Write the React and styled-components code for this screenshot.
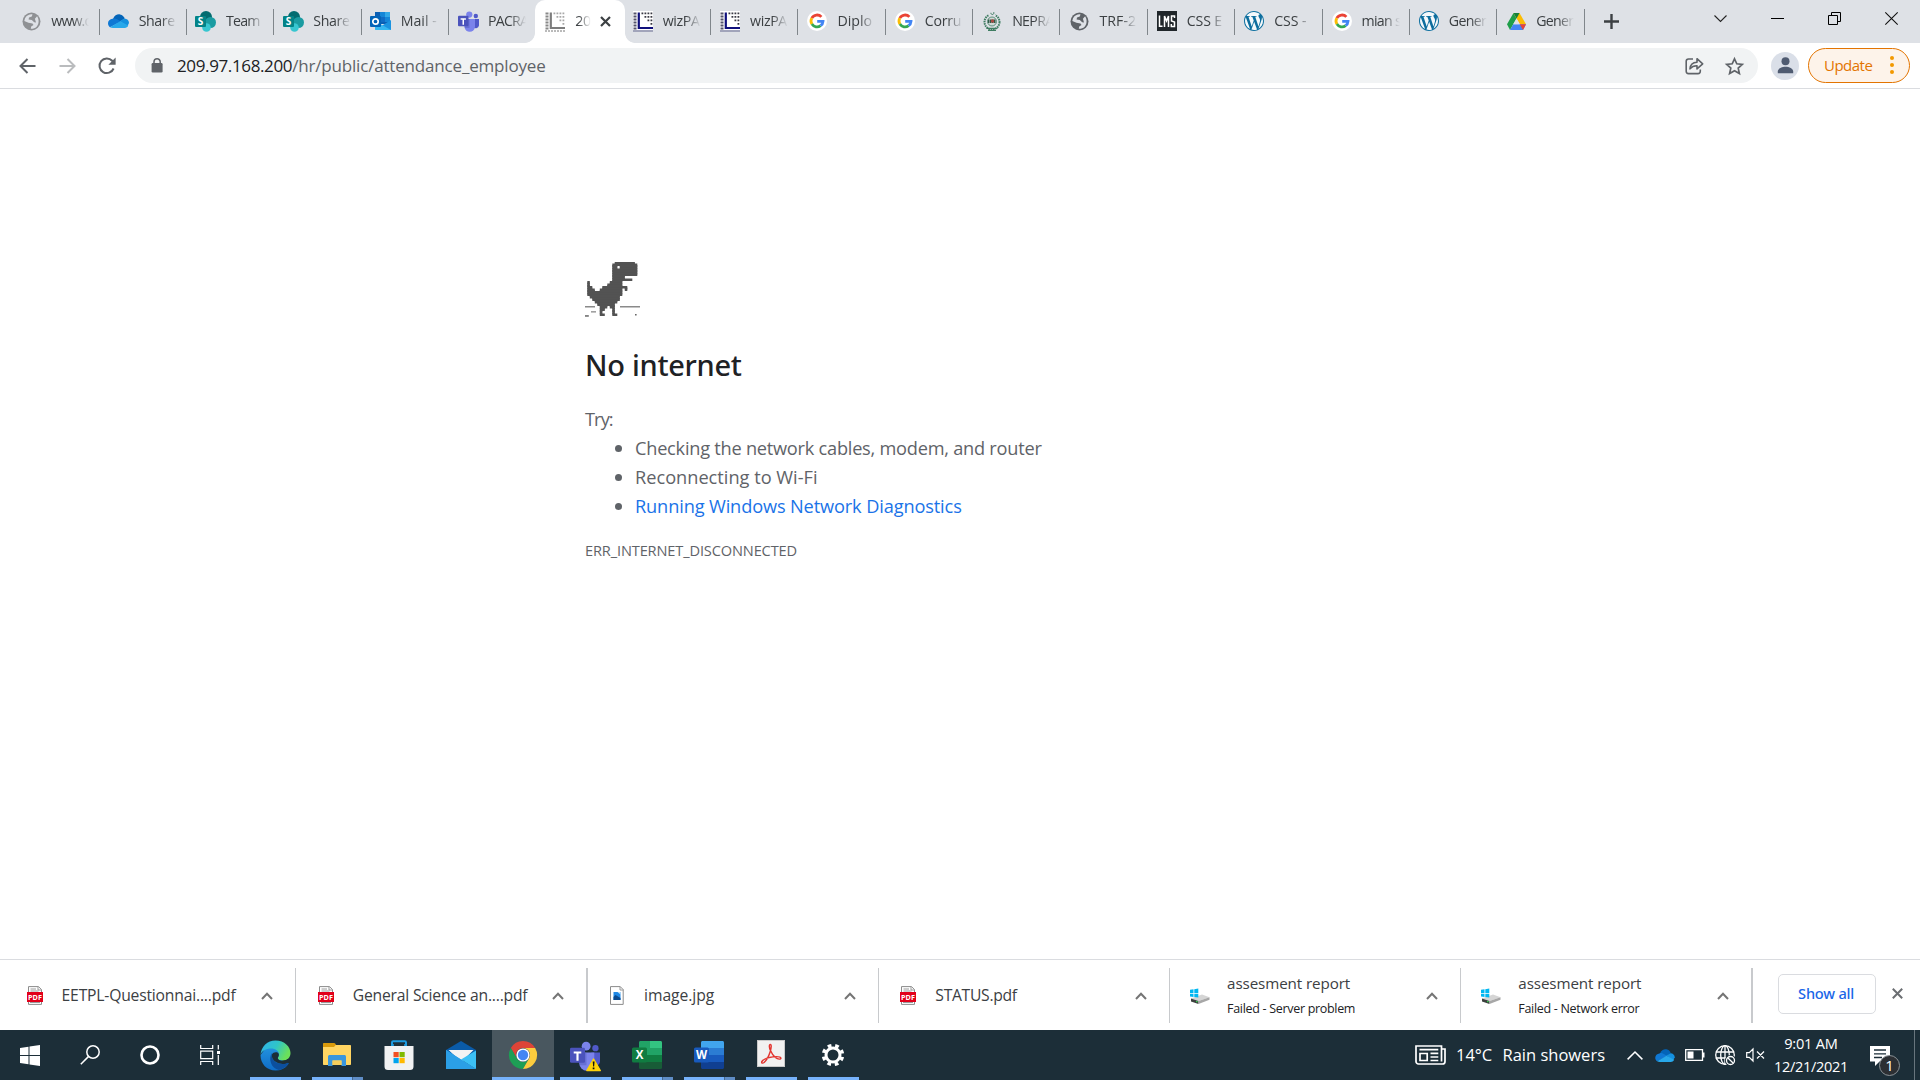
import React from "react";
import styled, { createGlobalStyle } from "styled-components";

const Global = createGlobalStyle`
  * { box-sizing: border-box; }
  body { margin: 0; background: #fff; overflow: hidden; }
  svg { display: block; flex: none; overflow: visible; }
`;

const Screen = styled.div`
  width: 1920px;
  height: 1080px;
  display: flex;
  flex-direction: column;
  background: #fff;
  color: #202124;
  font-family: "Open Sans", "Noto Sans", sans-serif;
  white-space: nowrap;
`;

const Text = styled.span`
  letter-spacing: ${(p) => p.$ls || 0}px;
`;

/* ---------- tab strip ---------- */
const TabStrip = styled.header`
  height: 43px;
  flex: none;
  display: flex;
  background: #dee1e6;
  padding-left: 12.3px;
`;

const Tab = styled.div`
  position: relative;
  width: 87.35px;
  height: 42px;
  flex: none;
  display: flex;
  align-items: center;
  padding-left: 9px;
  &::after {
    content: "";
    position: absolute;
    right: 0;
    top: 9px;
    width: 1px;
    height: 26px;
    background: ${(p) => (p.$noLine ? "transparent" : "#80868b")};
  }
`;

const ActiveTab = styled.div`
  position: relative;
  width: 89.5px;
  height: 43px;
  margin: 0 -1.05px;
  flex: none;
  display: flex;
  align-items: center;
  padding: 0 0 1px 10px;
  background: #fff;
  border-radius: 10px 10px 0 0;
  z-index: 1;
  &::before,
  &::after {
    content: "";
    position: absolute;
    bottom: 0;
    width: 10px;
    height: 10px;
  }
  &::before {
    left: -10px;
    background: radial-gradient(circle at 0 0, transparent 9.5px, #fff 10.2px);
  }
  &::after {
    right: -10px;
    background: radial-gradient(circle at 100% 0, transparent 9.5px, #fff 10.2px);
  }
`;

const TabTitle = styled.span`
  width: ${(p) => p.$w || 38}px;
  margin-left: 10px;
  overflow: hidden;
  font-size: 14.2px;
  line-height: 22px;
  letter-spacing: ${(p) => p.$ls ?? -0.4}px;
  color: #3c4043;
  -webkit-mask-image: linear-gradient(90deg, #000 ${(p) => (p.$w ? 20 : 58)}%, transparent 100%);
  mask-image: linear-gradient(90deg, #000 ${(p) => (p.$w ? 20 : 58)}%, transparent 100%);
`;

const CloseTab = styled.div`
  margin-left: 9px;
`;

const NewTab = styled.div`
  display: flex;
  align-items: center;
  margin-left: 19.5px;
`;

const WindowButtons = styled.div`
  margin-left: auto;
  display: flex;
  align-items: center;
  height: 37px;
  padding-right: 0.5px;
`;

const WindowButton = styled.div`
  width: ${(p) => p.$w || 57}px;
  display: flex;
  justify-content: center;
`;

/* ---------- toolbar ---------- */
const Toolbar = styled.div`
  height: 46px;
  flex: none;
  display: flex;
  align-items: center;
  border-bottom: 1px solid #dadce0;
  padding: 0 10px 0 7px;
`;

const NavButton = styled.div`
  width: 40px;
  display: flex;
  justify-content: center;
`;

const Omnibox = styled.div`
  width: 1623px;
  height: 35px;
  margin-left: 8px;
  border-radius: 18px;
  background: #f1f3f4;
  display: flex;
  align-items: center;
  padding: 0 14px 0 15px;
`;

const Url = styled.div`
  margin-left: 13px;
  padding-top: 1px;
  font-size: 17px;
  line-height: 24px;
  color: #5f6368;
`;

const Host = styled.span`
  color: #202124;
  letter-spacing: -0.37px;
`;

const OmniActions = styled.div`
  margin-left: auto;
  display: flex;
  align-items: center;
  gap: 21px;
`;

const Avatar = styled.div`
  width: 28px;
  height: 28px;
  border-radius: 50%;
  background: #dadfe8;
  margin-left: 13px;
  display: flex;
  align-items: center;
  justify-content: center;
`;

const UpdatePill = styled.div`
  width: 102px;
  height: 35px;
  margin-left: 9px;
  border: 1.5px solid #e37400;
  border-radius: 18px;
  background: #fdf3ea;
  color: #e37400;
  display: flex;
  align-items: center;
  padding: 0 15px 2px 15px;
  justify-content: space-between;
  font-size: 15px;
  line-height: 20px;
`;

const Dots = styled.div`
  display: flex;
  flex-direction: column;
  gap: 2.6px;
  padding-top: 1px;
  i {
    width: 4px;
    height: 4px;
    border-radius: 50%;
    background: #f29900;
  }
`;

/* ---------- error page ---------- */
const Page = styled.main`
  flex: 1;
  padding: 172px 0 0 585px;
  color: #5f6368;
`;

const Title = styled.h1`
  margin: 28px 0 0;
  font: 500 29px/40px "Noto Sans", sans-serif;
  letter-spacing: -0.28px;
  color: #202124;
`;

const Suggestions = styled.div`
  margin-top: 20px;
  font-size: 18.2px;
  line-height: 29px;
`;

const List = styled.ul`
  list-style: none;
  margin: 0;
  padding: 0 0 0 29.5px;
`;

const Item = styled.li`
  display: flex;
  align-items: center;
  gap: 13.5px;
  color: ${(p) => (p.$link ? "#1a73e8" : "#5f6368")};
  &::before {
    content: "";
    width: 7px;
    height: 7px;
    border-radius: 50%;
    background: #5f6368;
  }
`;

const ErrorCode = styled.div`
  margin-top: 19px;
  font-size: 14.6px;
  line-height: 20px;
  letter-spacing: -0.14px;
`;

/* ---------- download shelf ---------- */
const Shelf = styled.section`
  height: 71px;
  flex: none;
  display: flex;
  border-top: 1px solid #dadce0;
  background: #fff;
  padding: 8px 0 0 5.1px;
`;

const Download = styled.div`
  width: 291.25px;
  height: 55px;
  flex: none;
  display: flex;
  align-items: center;
  border-right: ${(p) => (p.$thick ? 2 : 1)}px solid #c8cacd;
  padding: 0 22px 0 ${(p) => (p.$failed ? 20 : 21.5)}px;
`;

const FileInfo = styled.div`
  flex: 1;
  margin-left: ${(p) => (p.$failed ? 17 : 18)}px;
  font-size: ${(p) => (p.$failed ? 15.2 : 15.7)}px;
  line-height: 25px;
  color: #3c4043;
`;

const Failure = styled.div`
  font-size: 12.5px;
  letter-spacing: -0.31px;
  color: #202124;
`;

const ShowAll = styled.button`
  width: 98px;
  height: 40px;
  margin: 6px 0 0 25.5px;
  padding: 0 2px 2px 0;
  border: 1px solid #dadce0;
  border-radius: 5px;
  background: #fff;
  color: #1a66e8;
  font: 500 14.6px/20px "Noto Sans", sans-serif;
  letter-spacing: -0.2px;
`;

const CloseShelf = styled.div`
  margin: 20px 0 0 15.5px;
`;

/* ---------- taskbar ---------- */
const Taskbar = styled.footer`
  height: 50px;
  flex: none;
  display: flex;
  background: #1c2e38;
  color: #fff;
`;

const System = styled.div`
  width: 60px;
  height: 50px;
  display: flex;
  align-items: center;
  justify-content: center;
`;

const Apps = styled.nav`
  display: flex;
  margin-left: 4px;
`;

const TaskApp = styled.div`
  position: relative;
  width: 62px;
  height: 50px;
  display: flex;
  justify-content: center;
  padding-top: ${(p) => p.$top ?? 10}px;
  background: ${(p) => (p.$active ? "#49575f" : "transparent")};
  &::after {
    content: "";
    position: absolute;
    bottom: 0;
    left: ${(p) => (p.$active ? 0 : 5.5)}px;
    right: ${(p) => (p.$active ? 0 : 5.5)}px;
    height: 3px;
    background: ${(p) =>
      !p.$running ? "transparent" : p.$stack ? "linear-gradient(90deg, #76b2fb 78%, #46698f 78%, #46698f 80%, #5f8dc6 80%)" : "#76b2fb"};
  }
`;

const Tray = styled.div`
  margin-left: auto;
  display: flex;
  align-items: center;
  font-size: 16.5px;
`;

const Weather = styled.div`
  display: flex;
  align-items: center;
  gap: 10.500px;
  margin-right: 22px;
  line-height: 22px;
`;

const TrayIcons = styled.div`
  display: flex;
  align-items: center;
  gap: 10px;
`;

const Clock = styled.div`
  width: 80px;
  margin-left: 6px;
  text-align: center;
  font-size: 14.6px;
  line-height: 22.6px;
`;

const Notifications = styled.div`
  position: relative;
  margin: 1px 0 0 19px;
`;

const Badge = styled.div`
  position: absolute;
  left: 9px;
  top: 9px;
  width: 21px;
  height: 21px;
  border-radius: 50%;
  border: 1px solid #8b9297;
  background: #2c2f33;
  font-size: 15px;
  line-height: 19px;
  text-align: center;
`;

const DesktopEdge = styled.div`
  width: 6px;
  height: 50px;
  margin-left: 24px;
  border-left: 1px solid #68757d;
`;

/* ---------- icons ---------- */
const Globe = ({ color = "#5f6368" }) => (
  <svg width="19" height="19" viewBox="0 0 19 19">
    <circle cx="9.5" cy="9.5" r="9" fill={color} />
    <path d="M3 6.2C5 3 8 2 10.5 2.4L9.8 4.5 7 5.6 6.6 7.6 9.8 8l2.4 2.2 1.8.2-1.1-3.6 2.2-2.6c2 3 2.2 7.5-.5 10.5-1.6 1.6-3.6 2.2-5.8 2.1l.4-2.4 2.3-1.4-1-1.5-4-.7L2.3 9z" fill="#dee1e6" />
  </svg>
);

const Cloud = ({ w = 21, h = 14 }) => (
  <svg width={w} height={h} viewBox="0 0 21 14">
    <path d="M5 5C6.500 1 9.500 0 12 .4c2.500.5 4 2 4.700 4.200L10 9z" fill="#0364b8" />
    <path d="M4.500 4.800C2 5 0 7 0 9.300c0 1.800.8 3 2 3.900L13 7.500 8.700 5C7.500 4.300 6 4.200 4.500 4.800z" fill="#0f78d4" />
    <path d="M12 7l4.500-2.500c2.500.1 4.500 2 4.500 4.500l-2 4z" fill="#1490df" />
    <path d="M2 13.200 12.200 7.200 20.300 11.600C19.500 13.200 18.300 14 16.800 14H5C3.800 14 2.800 13.700 2 13.200z" fill="#28a8ea" />
  </svg>
);

const SharePoint = () => (
  <svg width="21" height="21" viewBox="0 0 21 21">
    <circle cx="11" cy="6" r="6" fill="#036c70" />
    <circle cx="15.500" cy="11.500" r="5.500" fill="#1a9ba1" />
    <circle cx="11.500" cy="16.500" r="4.300" fill="#37c6d0" />
    <rect y="5" width="11" height="11" rx="1" fill="#038387" />
    <text x="5.500" y="14.200" textAnchor="middle" fontFamily="Open Sans" fontWeight="700" fontSize="10" fill="#fff">S</text>
  </svg>
);

const Outlook = () => (
  <svg width="21" height="20" viewBox="0 0 21 20">
    <rect x="5" y="1" width="15" height="12" fill="#0a5fb4" />
    <path d="M10 1h5v5h-5z" fill="#1486d8" />
    <path d="M15 1h5v5h-5z" fill="#32a9e7" />
    <path d="M10 6h5v5h-5z" fill="#0f6bc4" />
    <path d="M15 6h5v5h-5z" fill="#1486d8" />
    <path d="M5 19h16V9l-8 5z" fill="#1a93e0" />
    <path d="M5 10l16 9H6c-.6 0-1-.4-1-1z" fill="#35b8f1" />
    <rect y="5" width="11" height="11" rx="1" fill="#0364b8" />
    <circle cx="5.500" cy="10.500" r="2.700" fill="none" stroke="#fff" strokeWidth="1.700" />
  </svg>
);

const Teams = ({ size = 21, warn }) => (
  <svg width={size} height={size} viewBox="0 0 21 21">
    <circle cx="17.800" cy="5" r="2.200" fill="#5059c9" />
    <path d="M15 8h6v6.500a3.200 3.200 0 0 1-6 1z" fill="#5059c9" />
    <circle cx="11.300" cy="3.600" r="3.100" fill="#7b83eb" />
    <path d="M6.500 8H17v7.500a5.200 5.200 0 0 1-10.500 0z" fill="#7b83eb" />
    <path d="M6 8h5.500v9H6.700z" fill="#5a62c3" opacity=".6" />
    <rect y="4.800" width="10.500" height="10.500" rx="1" fill="#4b53bc" />
    <path d="M2.600 7.300h5.300v1.500H6v5H4.500v-5H2.600z" fill="#fff" />
    {warn && (
      <g>
        <path d="M16.500 12.600 21.200 20.700H11.800z" fill="#fdd20a" stroke="#fdd20a" strokeWidth="1" strokeLinejoin="round" />
        <path d="M15.900 14.300h1.300l-.3 3.500h-.7zM15.900 18.600h1.200v1.200h-1.200z" fill="#111" />
      </g>
    )}
  </svg>
);

const Pacra = ({ gray }) => {
  const line = gray ? "#7d7d7d" : "#10107c";
  const dot = gray ? "#a8a8a8" : "#3a3a44";
  return (
    <svg width="20" height="21" viewBox="0 0 20 21">
      <rect width="20" height="21" fill="#fff" />
      <path d="M5.800 1.500V17H20" fill="none" stroke={line} strokeWidth="2.200" />
      <path d="M2 1.500v17" stroke={gray ? "#888" : "#55556b"} strokeWidth="3" strokeDasharray="2 1" />
      <path d="M8.500 2.300H20M11.500 5.800H20M14.500 9.300H20M17.500 12.800H20" stroke={dot} strokeWidth="1.800" strokeDasharray="1.800 1.200" />
      <path d="M0 20h20" stroke={gray ? "#777" : "#444a77"} strokeWidth="1" strokeDasharray={gray ? "2 1" : "none"} />
    </svg>
  );
};

const Google = () => (
  <svg width="20" height="20" viewBox="0 0 20 20">
    <circle cx="10" cy="10" r="10" fill="#fff" />
    <g fill="none" strokeWidth="2.800">
      <path d="M14.400 5.900A6 6 0 0 0 4.800 7.100" stroke="#ea4335" />
      <path d="M4.800 7.100A6 6 0 0 0 4.900 13.100" stroke="#fbbc05" />
      <path d="M4.900 13.100A6 6 0 0 0 13.600 14.700" stroke="#34a853" />
      <path d="M13.600 14.700A6 6 0 0 0 16 10.300H10.200" stroke="#4285f4" />
    </g>
  </svg>
);

const Nepra = () => (
  <svg width="20" height="20" viewBox="0 0 20 20" fill="none" stroke="#3f7d62">
    <circle cx="10" cy="11" r="7.500" strokeWidth="2" strokeDasharray="1.500 .8" />
    <circle cx="10" cy="10.500" r="4.500" strokeWidth=".8" fill="#cfd9d6" />
    <path d="M6 9.500h8M6 11h8" strokeWidth="2" stroke="#33594a" strokeDasharray="1.500 .5" />
    <path d="M9 8.500h3v3H9z" fill="#a84a42" stroke="none" />
    <path d="M6 19.300h8M4.500 17.300l11 0" strokeWidth="1.300" />
    <rect x="7" y="0" width="6" height="5" fill="#dee1e6" stroke="none" />
    <path d="M11.500 1a1.500 1.500 0 1 1-2.600.8" strokeWidth="1" />
  </svg>
);

const Lms = () => (
  <svg width="20" height="20" viewBox="0 0 20 20">
    <rect width="20" height="20" fill="#20262a" />
    <path d="M2.500 4.500v10.800h3M7.500 16V5l2 5 2-5v11M17.500 7V5h-3v5l3 1v4.500h-3.200V13" fill="none" stroke="#fff" strokeWidth="1.500" />
  </svg>
);

const WordPress = () => (
  <svg width="20" height="20" viewBox="0 0 24 24">
    <circle cx="12" cy="12" r="11.900" fill="#f5f9fb" />
    <path fill="#0d6e9e" d="M21.469 6.825c.84 1.537 1.318 3.300 1.318 5.175 0 3.979-2.156 7.456-5.363 9.325l3.295-9.527c.615-1.540.82-2.771.82-3.864 0-.405-.026-.78-.07-1.110m-7.981.105c.647-.03 1.232-.105 1.232-.105.582-.075.514-.93-.067-.899 0 0-1.755.135-2.880.135-1.064 0-2.850-.15-2.850-.15-.585-.03-.661.855-.075.885 0 0 .54.061 1.125.09l1.680 4.605-2.370 7.080L5.354 6.900c.649-.03 1.234-.1 1.234-.1.585-.075.516-.93-.065-.896 0 0-1.746.138-2.874.138-.2 0-.438-.008-.69-.015C4.911 3.150 8.235 1.215 12 1.215c2.809 0 5.365 1.072 7.286 2.833-.046-.003-.091-.009-.141-.009-1.060 0-1.812.923-1.812 1.914 0 .89.513 1.643 1.060 2.531.411.72.89 1.643.89 2.977 0 .915-.354 1.994-.821 3.479l-1.075 3.585-3.900-11.610.001.014zM12 22.784c-1.059 0-2.081-.153-3.048-.437l3.237-9.406 3.315 9.087c.024.053.05.101.078.149-1.120.393-2.325.609-3.582.609M1.211 12c0-1.564.336-3.050.935-4.390L7.290 21.709C3.694 19.960 1.212 16.271 1.211 12M12 0C5.385 0 0 5.385 0 12s5.385 12 12 12 12-5.385 12-12S18.615 0 12 0" />
  </svg>
);

const Drive = () => (
  <svg width="19" height="17" viewBox="0 0 19 17">
    <path d="M6.500 0 0 11.300 3 17 9.500 5.500z" fill="#1e9e4a" />
    <path d="M12.500 0 19 11.300h-6.200L6.500 0z" fill="#fbbc04" />
    <path d="M6.500 0h6L9.500 5.500z" fill="#15803c" />
    <path d="M6.200 11.300H19L16 17H3z" fill="#4285f4" />
    <path d="M12.800 11.300H19L16 17z" fill="#ea4335" />
    <path d="M6.200 11.300 9.500 5.500l3.300 5.800z" fill="#dee1e6" />
  </svg>
);

const DINO = [
  "...........########.",
  "..........##########",
  "..........##.#######",
  "..........##########",
  "..........##########",
  "..........##########",
  "..........#####.....",
  "..........########..",
  "#........#####......",
  "#.......######......",
  "##....##########....",
  "###..#########.#....",
  "##############......",
  "##############......",
  ".############.......",
  "..###########.......",
  "...#########........",
  "....#######.........",
  ".....###.##.........",
  ".....##...#.........",
  ".....#....#.........",
  ".....##...##........",
];

const spans = DINO.flatMap((row, y) => [...row.matchAll(/#+/g)].map((m) => ({ x: m.index, y, w: m[0].length })));

/* Each span reaches into the row below only where the sprite is solid there, so the rows join without seams. */
const dinoPath = spans
  .map(({ x, y, w }) => (y === 0 ? `M${x} .4h${w}v.6h${-w}z` : `M${x} ${y}h${w}v1h${-w}z`))
  .join("");

const joins = DINO.slice(0, -1)
  .flatMap((row, y) =>
    [...row].map((c, x) => (c === "#" && DINO[y + 1][x] === "#" ? `M${x} ${y + 0.6}h1v.8h-1z` : ""))
  )
  .join("");

const Dino = () => (
  <svg width="56" height="56" viewBox="0 0 56 56" fill="#535353">
    <g transform="translate(2.300 0) scale(2.500)">
      <path d={dinoPath} />
      <path d={joins} />
    </g>
    <g fill="#8a8a8a">
      <rect y="45" width="10" height="1.500" />
      <rect x="35" y="45" width="20" height="1.500" />
      <rect x="6" y="50.200" width="5" height="1.300" />
      <rect y="54.200" width="3.800" height="1.500" fill="#666" />
      <rect x="50" y="53" width="1.600" height="1.500" fill="#666" />
    </g>
  </svg>
);

const PdfFile = () => (
  <svg width="17" height="19" viewBox="0 0 17 19">
    <path d="M1.500 18.400V.6h10l3 3v14.800z" fill="#fff" stroke="#8b8b8b" />
    <path d="M11 .6v3.400h3.500M3.500 3h5.500M3.500 5h8M3 16.500h10" fill="none" stroke="#9a9a9a" />
    <rect y="6" width="16" height="10" fill="#e2001a" />
    <text x="8" y="13.800" textAnchor="middle" fontFamily="Open Sans" fontWeight="700" fontSize="7.200" fill="#fff">PDF</text>
  </svg>
);

const ImageFile = () => (
  <svg width="17" height="19" viewBox="0 0 17 19">
    <path d="M1.500 18.400V.6h9.700l3 3v14.800z" fill="#fff" stroke="#8b8b8b" />
    <path d="M11 .6v3.400h3.500" fill="none" stroke="#9a9a9a" />
    <rect x="4.500" y="6" width="7" height="8" fill="#1e88e5" />
    <path d="M4.500 11l2-2 5 3v2h-7z" fill="#0b4a8f" />
    <path d="M8.500 6h3v2.500z" fill="#bfe3fb" />
  </svg>
);

const DriveFile = () => (
  <svg width="20" height="16" viewBox="0 0 20 16">
    <path d="M1 10.500 12 6.500l7.500 2.700L8.500 13z" fill="#d5d5d5" />
    <path d="M1 10.500 8.500 13v3L1 13.500z" fill="#3b3f3d" />
    <path d="M8.500 13l11-3.800v2.600L8.500 16z" fill="#a7a7a7" />
    <rect x="6" y="13" width="1.600" height="1.200" fill="#35d04e" />
    <path d="M0 1.800 3.500 1.300V5H0zM4.300 1.200 8.300.6V5h-4zM0 5.700h3.500v3.200L0 8.500zM4.300 5.700h4v3.900l-4-.6z" fill="#00b7f1" />
  </svg>
);

const Chevron = () => (
  <svg width="12" height="8" viewBox="0 0 12 8">
    <path d="M1 7 6 1.800 11 7" fill="none" stroke="#757575" strokeWidth="2" />
  </svg>
);

const Edge = () => (
  <svg width="31" height="31" viewBox="0 0 31 31">
    <defs>
      <linearGradient id="edgeTop" x1="0" y1="0" x2="1" y2=".4">
        <stop offset="0" stopColor="#2fb0ee" />
        <stop offset=".55" stopColor="#2fc5c8" />
        <stop offset="1" stopColor="#6be05a" />
      </linearGradient>
      <linearGradient id="edgeBody" x1="0" y1="0" x2="0" y2="1">
        <stop offset="0" stopColor="#2496e0" />
        <stop offset="1" stopColor="#0f6cc8" />
      </linearGradient>
    </defs>
    <path d="M.5 15C.5 24 7 30.500 15.500 30.500c5 0 9.500-2 12.500-6 1-1.300.2-2-1-1.500-1 .5-2 .8-3.500.8L18 8 8 5z" fill="url(#edgeBody)" />
    <path d="M.5 15C1 6.500 7.500.5 15.500.5c9 0 15 6.300 15 12.500 0 4.500-3 7.500-7.500 7.500-4 0-5.500-1.300-5.300-2.400.2-.9 1.300-1.600 1.300-3.600 0-3.500-3.500-6-8-6C6 8.500 1.500 11 .5 15z" fill="url(#edgeTop)" />
    <path d="M12 13c-4 5.500-1 15.500 7 17 3.500-.8 6.700-2.700 9-5.500 1-1.300.2-2-1-1.500-1.500.7-3 1-4.500.9C15 23.600 10.500 19 12 13z" fill="#0c4f9e" />
    <path d="M12 14.500c1-2.500 5.500-3 6.700-.8.900 2-.9 3-.9 4.400 0 1.600 2 2.700 5.200 2.600 2-.1 3.800-.8 5.200-2L30.500 20c-.3 1.300-.8 2.300-1.500 3-.8-.4-1.500-.2-2 0-1.500.7-3 1-4.500.9C16 23.500 11 19.500 12 14.500z" fill="#1c2e38" />
  </svg>
);

const Explorer = () => (
  <svg width="28" height="23" viewBox="0 0 28 23">
    <path d="M0 1c0-.6.400-1 1-1h9.500c1 0 1.500 0 2 1l.5 1v4H0z" fill="#d99a0b" />
    <path d="M0 4h11l1.700-2H27c.6 0 1 .4 1 1v18c0 .6-.4 1-1 1H1c-.6 0-1-.4-1-1z" fill="#ffd562" />
    <path d="M5 23v-9.300c0-1 .7-1.700 1.700-1.700h14.600c1 0 1.700.7 1.700 1.700V23h-4.500v-5.500h-9V23z" fill="#3a96dd" />
    <path d="M9.500 17.500h9V22h-9z" fill="#f7ce5c" />
  </svg>
);

const Store = () => (
  <svg width="30" height="32" viewBox="0 0 30 32">
    <path d="M8 8V3.500C8 2.800 8.500 2.300 9.200 2.300h11.600c.7 0 1.200.5 1.200 1.200V8" fill="none" stroke="#1d9be0" strokeWidth="2" />
    <path d="M.5 7h29v20.500a3.500 3.500 0 0 1-3.500 3.500H4A3.500 3.500 0 0 1 .5 27.500z" fill="#f1f2f3" />
    <path d="M8 7h1.800v-2H8zM20.200 7H22v-2h-1.800z" fill="#1d9be0" />
    <rect x="9.500" y="13" width="5.200" height="5.200" fill="#f25022" />
    <rect x="15.500" y="13" width="5.200" height="5.200" fill="#7fba00" />
    <rect x="9.500" y="19" width="5.200" height="5.200" fill="#00a4ef" />
    <rect x="15.500" y="19" width="5.200" height="5.200" fill="#ffb900" />
  </svg>
);

const Mail = () => (
  <svg width="30" height="28" viewBox="0 0 30 28">
    <path d="M0 9 15 0l15 9v6H0z" fill="#0a5ba8" />
    <path d="M2.500 9h25l-12 12z" fill="#f3f3f3" />
    <path d="M0 9 15 18.500 30 28H0z" fill="#2aa3ea" />
    <path d="M30 9.500V28L15 18.500z" fill="#3cc0f5" />
    <path d="M0 9v19h30L15 18.500z" fill="#2b9fe6" />
  </svg>
);

const Chrome = () => (
  <svg width="28" height="28" viewBox="0 0 28 28">
    <path d="M1.870 7A14 14 0 0 1 26.130 7H14a7 7 0 0 0-6.060 10.500z" fill="#dd4437" />
    <path d="M1.870 7A14 14 0 0 0 14 28l6.060-10.500a7 7 0 0 1-12.120 0z" fill="#1e9e55" />
    <path d="M14 28A14 14 0 0 0 26.130 7H14a7 7 0 0 1 6.060 10.500z" fill="#fccc3e" />
    <circle cx="14" cy="14" r="6.600" fill="#fff" />
    <circle cx="14" cy="14" r="5.200" fill="#4285f4" />
  </svg>
);

const Office = ({ word }) => (
  <svg width="30" height="28" viewBox="0 0 30 28">
    {word ? (
      <g>
        <path d="M7 1.500C7 .7 7.700 0 8.500 0h20c.8 0 1.500.7 1.500 1.500V7H7z" fill="#41a5ee" />
        <path d="M7 7h23v7H7z" fill="#2b7cd3" />
        <path d="M7 14h23v7H7z" fill="#185abd" />
        <path d="M7 21h23v5.500c0 .8-.7 1.500-1.500 1.500h-20c-.8 0-1.500-.7-1.500-1.500z" fill="#103f91" />
      </g>
    ) : (
      <g>
        <rect x="7" width="23" height="28" rx="1.500" fill="#185c37" />
        <path d="M7 1.500C7 .7 7.700 0 8.500 0H18v14H7z" fill="#21a366" />
        <path d="M18 0h10.500c.8 0 1.500.7 1.500 1.500V7H18z" fill="#33c481" />
        <path d="M18 7h12v7H18z" fill="#21a366" />
        <path d="M7 14h23v7H7z" fill="#107c41" />
      </g>
    )}
    <rect y="6.500" width="15" height="15" rx="1.500" fill={word ? "#185abd" : "#107c41"} />
    <text x="7.500" y="18.200" textAnchor="middle" fontFamily="Open Sans" fontWeight="700" fontSize="11.500" fill="#fff">{word ? "W" : "X"}</text>
  </svg>
);

const Acrobat = () => (
  <svg width="28" height="27" viewBox="0 0 28 27">
    <rect x=".5" y=".5" width="27" height="26" fill="#f1f1f1" stroke="#c9c9c9" />
    <path d="M13.500 10.500C12 7.500 12 4.500 13.300 4.500s1.200 3-.2 7.500c-1.300 4-3.800 8.500-6 10.500-1.600 1.300-3.100.4-2.200-1 1.400-2 6-4 11-4.600 3.500-.4 7.600-.3 8 1.200.3 1.500-3 1.300-5.500-.6-2.200-1.800-3.800-4.300-4.900-7z" fill="none" stroke="#e3342f" strokeWidth="1.400" />
  </svg>
);

const Gear = () => (
  <svg width="24" height="24" viewBox="0 0 24 24">
    <g fill="none" stroke="#fff">
      <circle cx="12" cy="12" r="7" strokeWidth="3" />
      <circle cx="12" cy="12" r="9.500" strokeWidth="3.500" strokeDasharray="3.700 3.761" strokeDashoffset="-1.880" />
    </g>
  </svg>
);

const Person = () => (
  <svg width="17" height="17" viewBox="0 0 17 17" fill="#4f5b71">
    <circle cx="8.500" cy="4.300" r="4" />
    <path d="M.8 16.300v-1.800c0-3 4-4.700 7.700-4.700s7.700 1.700 7.700 4.700v1.800z" />
  </svg>
);

const Share = () => (
  <svg width="19" height="18" viewBox="0 0 19 18" fill="none" stroke="#5f6368" strokeWidth="1.600" strokeLinejoin="round">
    <path d="M8 2H3.500A2.300 2.300 0 0 0 1.200 4.300v10A2.300 2.300 0 0 0 3.500 16.600h9.500a2.300 2.300 0 0 0 2.300-2.300V12.500" />
    <path d="M5 11.800C5.300 7.700 8 5.300 12 5.200V1.700l5.700 5.100-5.700 5.100V8.700C9 8.600 6.800 9.500 5 11.800z" />
  </svg>
);

const Star = () => (
  <svg width="19" height="18" viewBox="0 0 19 18">
    <path d="M9.500 1.800l2.300 5 5.500.6-4.100 3.700 1.200 5.400-4.900-2.800-4.900 2.800 1.200-5.400L1.700 7.400l5.500-.6z" fill="none" stroke="#5f6368" strokeWidth="1.700" />
  </svg>
);

/* ---------- data ---------- */
const before = [
  { icon: <Globe color="#8f9194" />, title: "www.o", ls: -0.9 },
  { icon: <Cloud />, title: "Share" },
  { icon: <SharePoint />, title: "Team", ls: -0.8 },
  { icon: <SharePoint />, title: "Share" },
  { icon: <Outlook />, title: "Mail -", ls: 0 },
  { icon: <Teams />, title: "PACRA", ls: -0.8, noLine: true },
];
const after = [
  { icon: <Pacra />, title: "wizPA", noLine: true },
  { icon: <Pacra />, title: "wizPA" },
  { icon: <Google />, title: "Diplo", ls: 0 },
  { icon: <Google />, title: "Corru", ls: -0.3 },
  { icon: <Nepra />, title: "NEPRA", ls: -0.7 },
  { icon: <Globe />, title: "TRF-2", ls: 0 },
  { icon: <Lms />, title: "CSS E", ls: -0.2 },
  { icon: <WordPress />, title: "CSS -", ls: -0.1 },
  { icon: <Google />, title: "mian s", ls: -0.7 },
  { icon: <WordPress />, title: "Gener", ls: -0.7 },
  { icon: <Drive />, title: "Gener", ls: -0.7 },
];
after[0].noLine = false;

const downloads = [
  { icon: <PdfFile />, name: "EETPL-Questionnai....pdf", ls: -0.2 },
  { icon: <PdfFile />, name: "General Science an....pdf", ls: -0.22, thick: true },
  { icon: <ImageFile />, name: "image.jpg", ls: -0.08 },
  { icon: <PdfFile />, name: "STATUS.pdf", ls: -0.3 },
  { icon: <DriveFile />, name: "assesment report", ls: -0.11, error: "Failed - Server problem" },
  { icon: <DriveFile />, name: "assesment report", ls: -0.11, error: "Failed - Network error", thick: true },
];

const IconSlot = styled.div`
  width: 20px;
  display: flex;
  justify-content: center;
`;

const renderTab = (t, i) => (
  <Tab key={i} $noLine={t.noLine}>
    <IconSlot>{t.icon}</IconSlot>
    <TabTitle $ls={t.ls}>{t.title}</TabTitle>
  </Tab>
);

export default function App() {
  return (
    <Screen>
      <Global />
      <TabStrip>
        {before.map(renderTab)}
        <ActiveTab>
          <Pacra gray />
          <TabTitle $w={16}>20</TabTitle>
          <CloseTab>
            <svg width="11" height="11" viewBox="0 0 11 11">
              <path d="M1 1l9 9M10 1l-9 9" stroke="#3c4043" strokeWidth="2.200" />
            </svg>
          </CloseTab>
        </ActiveTab>
        {after.map(renderTab)}
        <NewTab>
          <svg width="15" height="15" viewBox="0 0 15 15">
            <path d="M7.500 0v15M0 7.500h15" stroke="#3c4043" strokeWidth="2.400" />
          </svg>
        </NewTab>
        <WindowButtons>
          <WindowButton>
            <svg width="13" height="7" viewBox="0 0 13 7">
              <path d="M.5.500l6 6 6-6" fill="none" stroke="#222" strokeWidth="1.100" />
            </svg>
          </WindowButton>
          <WindowButton>
            <svg width="13" height="1" viewBox="0 0 13 1">
              <path d="M0 .5h13" stroke="#000" />
            </svg>
          </WindowButton>
          <WindowButton>
            <svg width="13" height="13" viewBox="0 0 13 13" fill="none" stroke="#000">
              <path d="M.5 3.500h9v9h-9zM3.500 3.500v-3h9v9h-3" />
            </svg>
          </WindowButton>
          <WindowButton>
            <svg width="13" height="13" viewBox="0 0 13 13">
              <path d="M.3.300l12.400 12.400M12.700.3.300 12.700" stroke="#111" strokeWidth="1.100" />
            </svg>
          </WindowButton>
        </WindowButtons>
      </TabStrip>

      <Toolbar>
        <NavButton>
          <svg width="17" height="16" viewBox="0 0 17 16" fill="none" stroke="#5f6368" strokeWidth="2">
            <path d="M16.500 8H2M8.500 1 1.500 8l7 7" />
          </svg>
        </NavButton>
        <NavButton>
          <svg width="17" height="16" viewBox="0 0 17 16" fill="none" stroke="#babcbe" strokeWidth="2">
            <path d="M.5 8H15M8.500 1l7 7-7 7" />
          </svg>
        </NavButton>
        <NavButton>
          <svg width="18" height="18" viewBox="0 0 18 18">
            <path d="M15.600 11.500A7.300 7.300 0 1 1 14.200 3.800L16 5.800" fill="none" stroke="#5f6368" strokeWidth="2" />
            <path d="M17.600.6v7.200h-7.200z" fill="#5f6368" />
          </svg>
        </NavButton>
        <Omnibox>
          <svg width="14" height="15" viewBox="0 0 14 15">
            <rect x="1.600" y="5" width="11" height="9.500" rx="1.200" fill="#5f6368" />
            <path d="M4 6V3.800a3.100 3.100 0 0 1 6.200 0V6" fill="none" stroke="#5f6368" strokeWidth="1.500" />
          </svg>
          <Url>
            <Host>209.97.168.200</Host>
            <Text $ls={-0.18}>/hr/public/attendance_employee</Text>
          </Url>
          <OmniActions>
            <Share />
            <Star />
          </OmniActions>
        </Omnibox>
        <Avatar>
          <Person />
        </Avatar>
        <UpdatePill>
          <Text $ls={-0.5}>Update</Text>
          <Dots>
            <i />
            <i />
            <i />
          </Dots>
        </UpdatePill>
      </Toolbar>

      <Page>
        <Dino />
        <Title>No internet</Title>
        <Suggestions>
          <Text $ls={-0.9}>Try:</Text>
          <List>
            <Item>
              <Text $ls={-0.24}>Checking the network cables, modem, and router</Text>
            </Item>
            <Item>Reconnecting to Wi-Fi</Item>
            <Item $link>
              <Text $ls={-0.13}>Running Windows Network Diagnostics</Text>
            </Item>
          </List>
        </Suggestions>
        <ErrorCode>ERR_INTERNET_DISCONNECTED</ErrorCode>
      </Page>

      <Shelf>
        {downloads.map((d, i) => (
          <Download key={i} $failed={!!d.error} $thick={d.thick}>
            {d.icon}
            <FileInfo $failed={!!d.error}>
              <Text $ls={d.ls}>{d.name}</Text>
              {d.error && <Failure>{d.error}</Failure>}
            </FileInfo>
            <Chevron />
          </Download>
        ))}
        <ShowAll>Show all</ShowAll>
        <CloseShelf>
          <svg width="11" height="11" viewBox="0 0 11 11">
            <path d="M.8.800l9.400 9.400M10.200.8.800 10.200" stroke="#6b6e72" strokeWidth="2" />
          </svg>
        </CloseShelf>
      </Shelf>

      <Taskbar>
        <System>
          <svg width="20" height="21" viewBox="0 0 20 21" fill="#fff">
            <path d="M0 3l8.500-1.200V10H0zM9.500 1.600 20 0v10H9.500zM0 11h8.500v8.200L0 18zM9.500 11H20v10L9.500 19.400z" />
          </svg>
        </System>
        <System>
          <svg width="20" height="20" viewBox="0 0 20 20" fill="none" stroke="#fff" strokeWidth="1.500">
            <circle cx="13" cy="7" r="6.200" />
            <path d="M8.600 11.400.8 19.300" />
          </svg>
        </System>
        <System>
          <svg width="20" height="20" viewBox="0 0 20 20">
            <circle cx="10" cy="10" r="8.500" fill="none" stroke="#fff" strokeWidth="2.600" />
          </svg>
        </System>
        <System>
          <svg width="20" height="20" viewBox="0 0 20 20" fill="none" stroke="#fff" strokeWidth="1.200">
            <path d="M.7 0v3.500h12V0M.7 20v-3.500h12V20M.7 6.200h12v7.500H.7zM18.300 0v4.500M18.300 10v10" />
            <path d="M17 6h3v3h-3z" fill="#fff" stroke="none" />
          </svg>
        </System>
        <Apps>
          <TaskApp $running $top={9.5}><Edge /></TaskApp>
          <TaskApp $running $stack $top={13}><Explorer /></TaskApp>
          <TaskApp $top={9}><Store /></TaskApp>
          <TaskApp $top={11}><Mail /></TaskApp>
          <TaskApp $running $active $top={11}><Chrome /></TaskApp>
          <TaskApp $running $top={11}><Teams size={30} warn /></TaskApp>
          <TaskApp $running $stack $top={11}><Office /></TaskApp>
          <TaskApp $running $stack $top={11}><Office word /></TaskApp>
          <TaskApp $running><Acrobat /></TaskApp>
          <TaskApp $running $top={12.5}><Gear /></TaskApp>
        </Apps>
        <Tray>
          <Weather>
            <svg width="31" height="20" viewBox="0 0 31 20" fill="none" stroke="#fff" strokeWidth="1.700">
              <path d="M26.500 4V1H1v15.500A2.500 2.500 0 0 0 3.500 19h24a2.500 2.500 0 0 0 2.500-2.500V4h-3.500v12.500" />
              <path d="M4.500 4.700h18.800M15.500 8.400h7.800M15.500 12h7.800M15.500 15.500h7.800M5 8.500h7.200v7H5z" />
            </svg>
            <Text $ls={-0.1}>14°C</Text>
            <Text>Rain showers</Text>
          </Weather>
          <TrayIcons>
            <svg width="18" height="9" viewBox="0 0 18 9">
              <path d="M.6 8.400 8 1l7.400 7.400" fill="none" stroke="#fff" strokeWidth="1.500" />
            </svg>
            <Cloud w={20} h={13} />
            <svg width="20" height="12" viewBox="0 0 20 12">
              <path d="M.7.700h16.800v10.600H.7z" fill="none" stroke="#fff" strokeWidth="1.300" />
              <path d="M2.500 2.500h6v7h-6zM18 3.500h1.500v5H18z" fill="#fff" />
            </svg>
            <svg width="21" height="21" viewBox="0 0 21 21" fill="none" stroke="#fff" strokeWidth="1.300">
              <circle cx="10" cy="10" r="9.300" />
              <ellipse cx="10" cy="10" rx="4.300" ry="9.300" />
              <path d="M.8 7h18.400M.8 13h18.400M10 .7v18.600" />
              <circle cx="15.500" cy="15.500" r="5.500" fill="#1c2e38" stroke="none" />
              <circle cx="15.500" cy="15.500" r="4" />
              <path d="M12.700 12.700l5.600 5.600" />
            </svg>
            <svg width="19" height="14" viewBox="0 0 19 14" fill="none" stroke="#fff" strokeWidth="1.200">
              <path d="M.7 4.700h2.600L7 1v12L3.300 9.300H.7zM11 3.500l7 7M18 3.500l-7 7" />
            </svg>
          </TrayIcons>
          <Clock>
            <Text $ls={-0.2}>9:01 AM</Text>
            <br />
            <Text $ls={-0.34}>12/21/2021</Text>
          </Clock>
          <Notifications>
            <svg width="20" height="20" viewBox="0 0 20 20">
              <path d="M0 0h20v15.500H9.500L5 20v-4.500H0z" fill="#fff" />
              <path d="M4 4h12M4 7.800h12M4 11.500h8" stroke="#1c2e38" strokeWidth="1.300" />
            </svg>
            <Badge>1</Badge>
          </Notifications>
          <DesktopEdge />
        </Tray>
      </Taskbar>
    </Screen>
  );
}
